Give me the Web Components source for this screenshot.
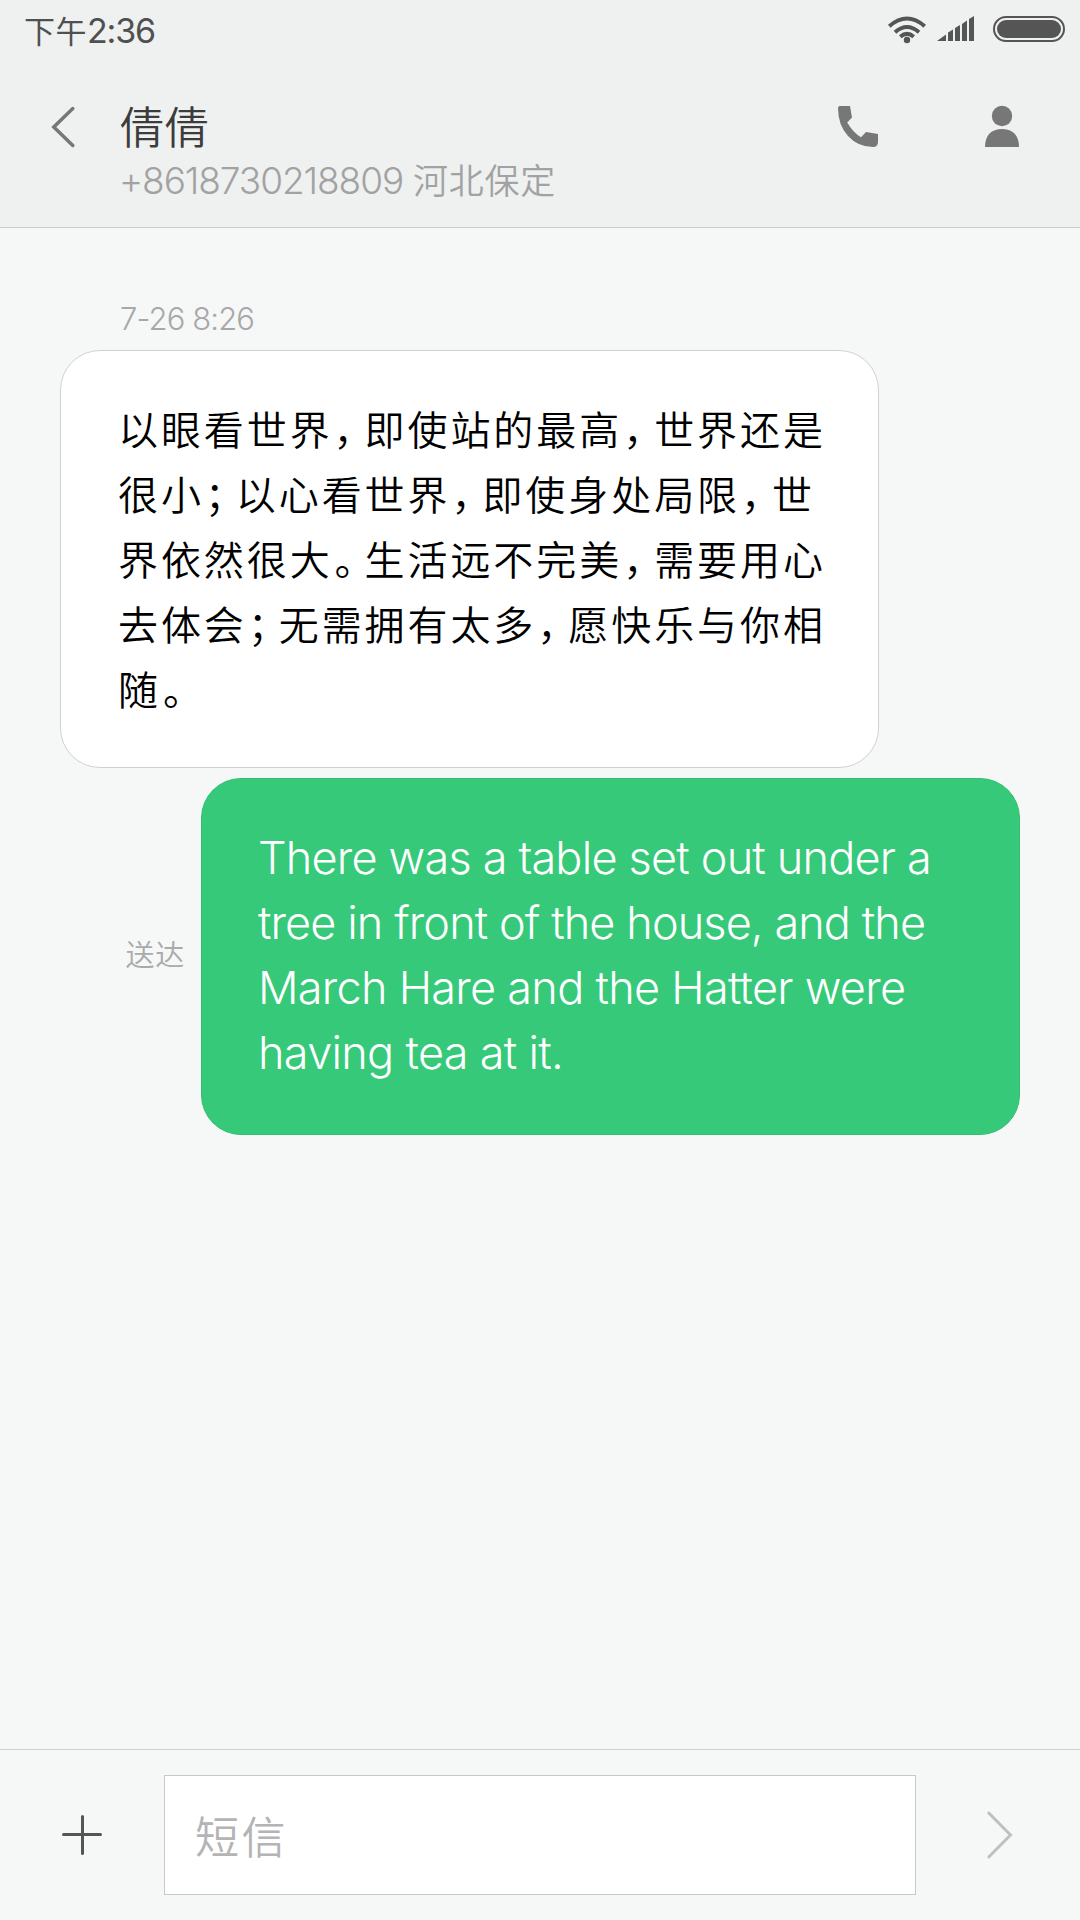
<!DOCTYPE html>
<html lang="zh-CN">
<head>
<meta charset="utf-8">
<title>倩倩</title>
<style>
html,body{margin:0;padding:0}
body{width:1080px;height:1920px;overflow:hidden;background:#f6f8f8;font-family:Inter,"Noto Sans CJK SC",sans-serif}
</style>
</head>
<body>
<sms-screen></sms-screen>
<script>
const define=(name,html)=>{
  const t=document.createElement('template');
  t.innerHTML=html;
  customElements.define(name,class extends HTMLElement{
    constructor(){super();this.attachShadow({mode:'open'}).append(t.content.cloneNode(true));}
  });
};

define('status-bar',`<style>
:host{display:flex;height:62px;align-items:center;justify-content:space-between;padding:0 15px 0 24px;box-sizing:border-box;color:#505050}
.time{display:flex;align-items:center;font-size:34px;line-height:62px;letter-spacing:-1.2px}
.cjk{font:400 31px/59px "Noto Sans CJK SC",sans-serif;letter-spacing:.5px;height:62px}
svg{display:block}
</style>
<div class="time"><span class="cjk">下午</span><span>2:36</span></div>
<svg width="180" height="62" viewBox="885 0 180 62" fill="none" stroke="#555" stroke-width="4">
<path d="M889.3 26.2Q907 10.800 924.700 26.200M895 32.200Q907 21.800 919 32.200M900.300 36.800Q907 31 913.700 36.800"/>
<circle cx="907" cy="40" r="3.200" fill="#555" stroke="none"/>
<g fill="#555" stroke="none"><path d="M937 41L946 34.500V41ZM948 41V32.500L953 29.500V41ZM955 41V28L960 25V41ZM962 41V24L967 20.500V41ZM969 41V19L974 16V41Z"/></g>
<rect x="994" y="17" width="70" height="24" rx="12" stroke-width="2"/>
<rect x="997" y="20" width="64" height="18" rx="9" fill="#555" stroke="none"/>
</svg>`);

define('chat-header',`<style>
:host{display:flex;height:165px;box-sizing:border-box;padding-bottom:33px}
.back{width:120px}
.who{flex:1}
.name{font:350 44px/60px "Noto Sans CJK SC",sans-serif;letter-spacing:.7px;color:#3c3c3c;padding-top:33px}
.num{display:flex;align-items:center;gap:10px;font-size:37px;font-weight:300;line-height:50px;color:#a2a2a2;padding-top:1px;margin-left:-1px}
.d{letter-spacing:-1.080px}
.cjk{font:350 35px/46px "Noto Sans CJK SC",sans-serif;letter-spacing:.7px;height:50px}
svg{display:block}
</style>
<svg class="back" width="120" height="130" viewBox="0 62 120 130" fill="none" stroke="#777" stroke-width="3.500" stroke-linecap="round"><path d="M72.800 108.500L53.800 127L72.800 145.500"/></svg>
<div class="who"><div class="name"><slot name="name"></slot></div>
<div class="num"><span class="d"><slot name="number"></slot></span><span class="cjk"><slot name="place"></slot></span></div></div>
<svg width="260" height="130" viewBox="820 62 260 130" fill="#777">
<path d="M838 108Q838 106 840 106H850L852 117.500L847.200 122.500Q853 132.500 861 137.200L866 132L878 134V142Q878 147 873 147Q858 147 848 136Q838 125 838 108Z"/>
<circle cx="1002" cy="116" r="10.200"/>
<path d="M985 147C985 135 991.500 129 1002 129S1019 135 1019 147Z"/>
</svg>`);

define('message-bubble',`<style>
:host{display:block;box-sizing:border-box;width:819px;border:1px solid #d0d2d2;border-radius:40px;background:#fff;padding:45px 0 46px 57px;color:#000;font:350 40px/65px "Noto Sans CJK SC",sans-serif;letter-spacing:2.920px}
:host([sent]){background:#36c979;border-color:#33be72;color:#fff;padding:46px 0 49px 56px;font:350 45px/65px Inter,sans-serif}
</style><slot></slot>`);

define('text-line',`<style>:host{display:block;white-space:nowrap;height:65px}
::slotted(i){font-style:normal;padding-left:1px;letter-spacing:-9px}
::slotted(i.stop){padding-left:2px;letter-spacing:-10px}</style><slot></slot>`);

define('compose-bar',`<style>
:host{display:flex;height:171px;box-sizing:border-box;border-top:1px solid #d0d2d2;align-items:center}
svg{display:block}
.field{box-sizing:border-box;width:752px;height:120px;border:1px solid #c8caca;background:#fff;padding-left:30px;font:350 44px/118px "Noto Sans CJK SC",sans-serif;letter-spacing:2.500px;color:#b4b4b4}
</style>
<svg width="164" height="170" viewBox="0 1750 164 170" fill="none" stroke="#555" stroke-width="3" stroke-linecap="round"><path d="M63.500 1834.500H100.500M82.500 1816.500V1853.500"/></svg>
<div class="field"><slot></slot></div>
<svg width="164" height="170" viewBox="916 1750 164 170" fill="none" stroke="#bfc0c0" stroke-width="3" stroke-linecap="round"><path d="M988.800 1813L1010.500 1835L988.800 1857"/></svg>`);

define('sms-screen',`<style>
:host{display:flex;flex-direction:column;width:1080px;height:1920px;background:#f6f8f8}
.top{background:#eff1f1;border-bottom:1px solid #ccc}
main{flex:1;display:flex;flex-direction:column}
.date{font-size:31px;font-weight:300;line-height:44px;letter-spacing:-.9px;color:#a8a8a8;padding:69px 0 9px 120px}
message-bubble{margin-left:60px}
.sent{display:flex;align-items:center;justify-content:flex-end;gap:16px;padding:10px 60px 0 0}
.sent message-bubble{margin:0}
.state{font:350 29px/40px "Noto Sans CJK SC",sans-serif;letter-spacing:.7px;color:#aaa;padding-bottom:8px}
</style>
<div class="top"><status-bar></status-bar><chat-header><span slot="name">倩倩</span><span slot="number">+8618730218809</span><span slot="place">河北保定</span></chat-header></div>
<main>
<div class="date">7-26 8:26</div>
<message-bubble>
<text-line>以眼看世界<i>，</i>即使站的最高<i>，</i>世界还是</text-line>
<text-line>很小<i>；</i>以心看世界<i>，</i>即使身处局限<i>，</i>世</text-line>
<text-line>界依然很大<i class="stop">。</i>生活远不完美<i>，</i>需要用心</text-line>
<text-line>去体会<i>；</i>无需拥有太多<i>，</i>愿快乐与你相</text-line>
<text-line>随<i class="stop">。</i></text-line>
</message-bubble>
<div class="sent"><span class="state">送达</span><message-bubble sent>
<text-line style="letter-spacing:-.79px">There was a table set out under a</text-line>
<text-line style="letter-spacing:-.89px">tree in front of the house, and the</text-line>
<text-line style="letter-spacing:-.71px">March Hare and the Hatter were</text-line>
<text-line style="letter-spacing:-.68px">having tea at it.</text-line>
</message-bubble></div>
</main>
<compose-bar>短信</compose-bar>`);
</script>
</body>
</html>
